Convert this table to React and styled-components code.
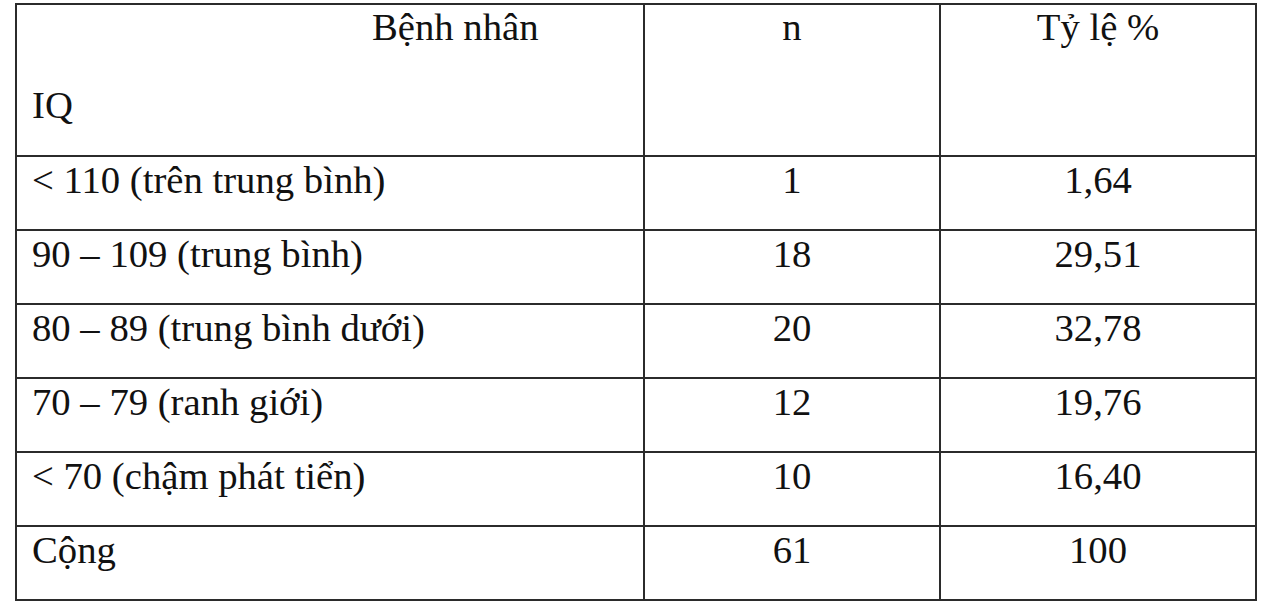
import React from "react";
import styled, { createGlobalStyle } from "styled-components";

const Global = createGlobalStyle`
  html, body { margin: 0; padding: 0; background: #ffffff; }
  body { font-family: "Liberation Serif", "Times New Roman", serif; color: #111; }
`;

const Page = styled.div`
  width: 1263px;
  height: 606px;
  overflow: hidden;
  padding: 3px 0 0 15px;
  box-sizing: border-box;
`;

const Table = styled.div`
  display: grid;
  grid-template-columns: 628px 296px 316px;
  grid-template-rows: 152px repeat(6, 74px);
  width: fit-content;
  border-top: 2px solid #2b2b2b;
  border-left: 2px solid #2b2b2b;
  font-size: 38.7px;
  line-height: 44px;
`;

const Cell = styled.div`
  box-sizing: border-box;
  border-right: 2px solid #2b2b2b;
  border-bottom: 2px solid #2b2b2b;
  padding-top: ${(p) => (p.$head ? "0" : "1px")};
  padding-left: ${(p) => (p.$align === "left" ? "15px" : "0")};
  text-align: ${(p) => p.$align || "center"};
  white-space: nowrap;
`;

const HeadCell = styled.div`
  box-sizing: border-box;
  border-right: 2px solid #2b2b2b;
  border-bottom: 2px solid #2b2b2b;
  display: flex;
  flex-direction: column;
  white-space: nowrap;
`;

const HeadTop = styled.div`
  padding-left: 355px;
`;

const HeadBottom = styled.div`
  padding-left: 15px;
  margin-top: 34px;
`;

const rows = [
  ["< 110 (trên trung bình)", "1", "1,64"],
  ["90 – 109 (trung bình)", "18", "29,51"],
  ["80 – 89 (trung bình dưới)", "20", "32,78"],
  ["70 – 79 (ranh giới)", "12", "19,76"],
  ["< 70 (chậm phát tiển)", "10", "16,40"],
  ["Cộng", "61", "100"],
];

export default function App() {
  return (
    <>
      <Global />
      <Page>
        <Table>
          <HeadCell>
            <HeadTop>Bệnh nhân</HeadTop>
            <HeadBottom>IQ</HeadBottom>
          </HeadCell>
          <Cell $head>n</Cell>
          <Cell $head>Tỷ lệ %</Cell>
          {rows.map((r, i) => (
            <React.Fragment key={i}>
              <Cell $align="left">{r[0]}</Cell>
              <Cell>{r[1]}</Cell>
              <Cell>{r[2]}</Cell>
            </React.Fragment>
          ))}
        </Table>
      </Page>
    </>
  );
}
